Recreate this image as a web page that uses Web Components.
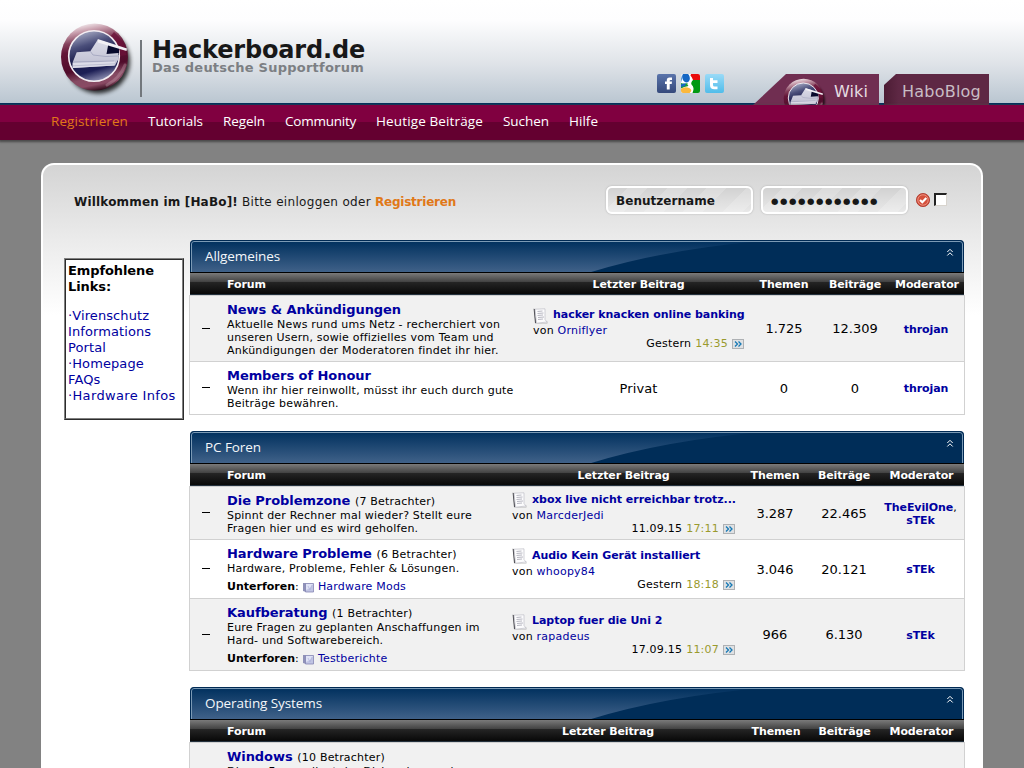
<!DOCTYPE html>
<html lang="de"><head><meta charset="utf-8"><title>Hackerboard.de</title>
<style>
html,body{margin:0;height:768px;overflow:hidden}
body{background:#828282;font-family:"DejaVu Sans",sans-serif;font-size:13px;color:#000}
</style></head><body>
<hb-header></hb-header>
<hb-nav>
<fit-text w="77" style="color:#e07818">Registrieren</fit-text><fit-text w="55">Tutorials</fit-text><fit-text w="42">Regeln</fit-text><fit-text w="71">Community</fit-text><fit-text w="107">Heutige Beiträge</fit-text><fit-text w="46">Suchen</fit-text><fit-text w="29">Hilfe</fit-text>
</hb-nav>
<hb-panel>
<hb-login slot="login"></hb-login>
<hb-links slot="side"></hb-links>
<hb-section name="Allgemeines" tw="75" cols="37px 306px 211px 80px 62px 78px" mp="4">
<hb-row class="odd" name="News &amp; Ankündigungen" desc="Aktuelle News rund ums Netz - recherchiert von|unseren Usern, sowie offizielles vom Team und|Ankündigungen der Moderatoren findet ihr hier." topics="1.725" posts="12.309" mods="throjan"><hb-post title-text="hacker knacken online banking" user="Orniflyer" day="Gestern" time="14:35"></hb-post></hb-row>
<hb-row name="Members of Honour" desc="Wenn ihr hier reinwollt, müsst ihr euch durch gute|Beiträge bewähren." topics="0" posts="0" mods="throjan"><span style="letter-spacing:.15px">Privat</span></hb-row>
</hb-section>
<hb-section name="PC Foren" tw="56" cols="37px 285px 223px 80px 58px 91px" mp="6">
<hb-row class="odd" name="Die Problemzone" viewers="(7 Betrachter)" desc="Spinnt der Rechner mal wieder? Stellt eure|Fragen hier und es wird geholfen." topics="3.287" posts="22.465" mods="TheEvilOne,sTEk"><hb-post title-text="xbox live nicht erreichbar trotz..." user="MarcderJedi" day="11.09.15" time="17:11"></hb-post></hb-row>
<hb-row name="Hardware Probleme" viewers="(6 Betrachter)" desc="Hardware, Probleme, Fehler &amp; Lösungen." sub="Hardware Mods" topics="3.046" posts="20.121" mods="sTEk"><hb-post title-text="Audio Kein Gerät installiert" user="whoopy84" day="Gestern" time="18:18"></hb-post></hb-row>
<hb-row class="odd" name="Kaufberatung" viewers="(1 Betrachter)" desc="Eure Fragen zu geplanten Anschaffungen im|Hard- und Softwarebereich." sub="Testberichte" topics="966" posts="6.130" mods="sTEk"><hb-post title-text="Laptop fuer die Uni 2" user="rapadeus" day="17.09.15" time="11:07"></hb-post></hb-row>
</hb-section>
<hb-section name="Operating Systems" tw="117" cols="37px 254px 254px 82px 55px 92px" mp="7">
<hb-row class="odd tall" name="Windows" viewers="(10 Betrachter)" desc="Dieses Forum dient der Diskussion rund um..." topics="" posts="" mods=""></hb-row>
</hb-section>
</hb-panel>
<script>
const esc=s=>s.replace(/&/g,'&amp;').replace(/</g,'&lt;');
class Base extends HTMLElement{
  connectedCallback(){
    if(this.shadowRoot)return;
    this.attachShadow({mode:'open'}).innerHTML=this.view();
  }
  a(n){return this.getAttribute(n)||''}
}
/* Text run that tracks its letters out or in to a given width. */
class FitText extends Base{
  view(){return '<style>:host{display:inline-block;white-space:nowrap}span{display:inline-block}</style><span><slot></slot></span>'}
  connectedCallback(){
    super.connectedCallback();
    const w=+this.a('w'),n=this.textContent.length;
    if(!w)return;
    const s=this.shadowRoot.querySelector('span');
    s.style.letterSpacing=((w-s.getBoundingClientRect().width)/n)+'px';
    this.style.width=w+'px';
  }
}
/* Round shoe emblem. */
class Logo extends Base{
  view(){return `<style>:host{display:block}svg{display:block;width:100%;height:100%;overflow:visible}</style>
<svg viewBox="0 0 72 74"><defs>
<linearGradient id="r" x1=".4" y1="0" x2=".6" y2="1"><stop offset="0" stop-color="#efe4e8"/><stop offset=".1" stop-color="#c79dac"/><stop offset=".24" stop-color="#83405b"/><stop offset=".36" stop-color="#641638"/><stop offset=".65" stop-color="#500c2b"/><stop offset=".8" stop-color="#854a62"/><stop offset=".9" stop-color="#8a4a64"/><stop offset="1" stop-color="#260412"/></linearGradient>
<linearGradient id="i" x1=".2" y1="0" x2=".5" y2="1"><stop offset="0" stop-color="#b4b7ce"/><stop offset=".3" stop-color="#4a4e7a"/><stop offset=".55" stop-color="#1b1d4c"/><stop offset=".8" stop-color="#1d1f55"/><stop offset="1" stop-color="#8486aa"/></linearGradient>
<linearGradient id="s" x1="0" y1="0" x2="0" y2="1"><stop offset="0" stop-color="#dcdce8"/><stop offset="1" stop-color="#bcbdd0"/></linearGradient>
<filter id="b" x="-30%" y="-30%" width="160%" height="160%"><feGaussianBlur stdDeviation="2.2"/></filter></defs>
<circle cx="38" cy="37.500" r="32" fill="#000" opacity=".8" filter="url(#b)"/>
<circle cx="34.500" cy="33" r="33.500" fill="url(#r)"/>
<path d="M47 61Q60 54 65 41" stroke="#c9a3b2" stroke-width="3" opacity=".35" fill="none" stroke-linecap="round"/>
<path d="M54 8Q65 17 66.500 31L60.500 32Q60 21 50 13Z" fill="#6b1238" opacity=".75"/>
<circle cx="34" cy="32" r="25.300" fill="url(#i)" stroke="#f3edf2" stroke-width="1.600"/>
<path d="M46.500 20L59 24V31H46Z" fill="#07092c"/>
<path d="M12.700 38.300L16.700 28.300L30.300 27.300L37.700 15.700L48.500 19L46.500 30L58.500 29L58.500 35L55 41.500L12.700 44Z" fill="url(#s)"/>
<path d="M37.700 15L67 24.500L66.500 27L38 18.500Z" fill="#f2f0f5"/>
<path d="M30.300 27.300L33 31L46 32.500L58 32M13 38L54 37" stroke="#a0a2bc" fill="none" stroke-width=".8"/>
<path d="M12.700 39L55 37.500L54.500 41.500L12.700 44Z" fill="#dcdce8"/><path d="M12.700 41.800L55 39.800" stroke="#a9abc2" stroke-width=".6"/></svg>`}
}
class Header extends Base{
  view(){return `<style>
:host{display:flex;height:103px;box-sizing:content-box;background:linear-gradient(#fff 0,#fdfdfe 20%,#dfe3e8 62%,#bac6d1 100%);border-bottom:2px solid #002e5c;position:relative}
.logo{width:72px;height:74px;margin:24px 0 0 60px;flex:none}
.bar{width:2px;height:57px;background:#72777c;margin:40px 10px 0 8px;flex:none}
.name{padding-top:38px;width:213px;font-weight:bold;white-space:nowrap}
.n{font-size:24px;line-height:24px;height:24px;color:#181818;display:block}
.t{font-size:13px;line-height:12px;height:12px;color:#7c7f83;display:block}
.soc{display:flex;gap:5px;margin:74px 0 0 292px}.soc svg{display:block;width:19px;height:19px}
.tabs{position:absolute;left:753px;top:74px;display:flex;gap:5px;height:31px;font-size:16px;line-height:35px}
.tab{box-sizing:border-box;overflow:hidden;height:31px;position:relative}
.w{width:126px;background:#702e51;clip-path:polygon(33px 0,100% 0,100% 100%,0 100%);padding-left:81px;color:#e5dce1}
.h{width:105px;background:linear-gradient(90deg,#4c1c34,#5e2844 14%);clip-path:polygon(12px 0,100% 0,100% 100%,0 100%,0 11px);padding-left:18px;color:#c9bdc4}
.w hb-logo{position:absolute;left:30px;top:5px;width:43px;height:44px}
</style>
<hb-logo class="logo"></hb-logo><div class="bar"></div>
<div class="name"><span class="n"><fit-text w="213">Hackerboard.de</fit-text></span><span class="t"><fit-text w="212">Das deutsche Supportforum</fit-text></span></div>
<div class="soc">
<svg viewBox="0 0 19 19"><defs><linearGradient id="f" x2="0" y2="1"><stop stop-color="#5a74ab"/><stop offset="1" stop-color="#35497b"/></linearGradient></defs><rect width="19" height="19" rx="2" fill="url(#f)"/><path d="M9.800 15.500V10H8V7.500H9.800V6.300Q9.800 3.500 12.500 3.500H15V6H13.500Q12.700 6 12.700 6.800V7.500H15L14.700 10H12.700V15.500Z" fill="#fff"/></svg>
<svg viewBox="0 0 19 19"><defs><clipPath id="c"><rect width="19" height="19" rx="2"/></clipPath></defs><g clip-path="url(#c)"><rect width="19" height="19" fill="#fff"/><path d="M10 0H19V6H12Q11 3 9.500 1.500Z" fill="#e90c0c"/><path d="M19 6V19H11.500Q14 13.500 10.500 10.500Q9.500 8.500 12 6Z" fill="#009913"/><path d="M0 1Q1.500 5 0 8.500Z" fill="#0b69c7"/><ellipse cx="5" cy="3.600" rx="3.700" ry="4.900" fill="#1467c4" transform="rotate(-18 5 3.600)"/><path d="M0 9Q3 10.500 6.500 9Q6 11 7.500 12Q3 12.500 0 14.500Z" fill="#1a9a30"/><path d="M0 10.500Q2 9 5 9.500L4 12L0 13Z" fill="#1467c4"/><ellipse cx="4.800" cy="16.600" rx="5.400" ry="3.300" fill="#fbb83c"/></g></svg>
<svg viewBox="0 0 19 19"><defs><linearGradient id="t" x2="0" y2="1"><stop stop-color="#9adaf7"/><stop offset="1" stop-color="#50bdea"/></linearGradient></defs><rect width="19" height="19" rx="2" fill="url(#t)"/><path d="M5 4H8V6.300H12.500V9H8V11Q8 12.500 9.500 12.500H12.500V15.300H9.500Q5 15.300 5 11Z" fill="#fff"/></svg>
</div>
<div class="tabs"><div class="tab w"><hb-logo></hb-logo><fit-text w="34">Wiki</fit-text></div><div class="tab h"><fit-text w="79">HaboBlog</fit-text></div></div>`}
}
class Nav extends Base{
  view(){return `<style>:host{display:flex;box-sizing:border-box;height:35px;padding-left:51px;background:linear-gradient(#800040 0 17px,#640030 17px);box-shadow:0 1px 2px 1px #4a4a4a;color:#fff;font:13.500px/33px "Open Sans",sans-serif;position:relative}
::slotted(*){margin-right:20px}</style><slot></slot>`}
}
class Panel extends Base{
  view(){return `<style>:host{display:block;box-sizing:border-box;width:942px;height:605px;overflow:hidden;margin:23px 0 0 41px;border:2px solid #fff;border-bottom:0;border-radius:13px 13px 0 0;background:linear-gradient(#d4d4d4,#ebebeb 75px,#fff 150px)}
.cols{display:flex}.side{width:120px;padding:18px 0 0 21px;margin-right:5px;flex:none}.main{display:flex;flex-direction:column;gap:16px;width:776px}</style>
<slot name="login"></slot><div class="cols"><div class="side"><slot name="side"></slot></div><div class="main"><slot></slot></div></div>`}
}
class Login extends Base{
  view(){return `<style>:host{display:flex;height:75px;box-sizing:border-box;padding:21px 0 0 31px;font-size:12px;color:#181818}
.t{width:532px;line-height:32px;white-space:nowrap;display:flex;gap:4px}
.f{box-sizing:border-box;width:147px;height:28px;border:2px solid #fff;border-radius:6px;margin-right:8px;padding-left:8px;line-height:27px;font-weight:bold;background:linear-gradient(rgba(255,255,255,0),rgba(255,255,255,.5)),repeating-linear-gradient(135deg,#d2d2d2 0 14px,#dadada 14px 28px);box-shadow:0 0 2px #aaa}
.p{font-size:8.500px;padding-left:8px;font-weight:normal}
svg{width:14px;height:14px;margin:7px 4px 0 0}
.c{box-sizing:border-box;width:13px;height:13px;margin-top:7px;background:#fff;border:solid;border-width:2px 1px 1px 2px;border-color:#222 #d8d4ce #d8d4ce #222}
b.o{color:#e07818}</style>
<div class="t"><b><fit-text w="164">Willkommen im [HaBo]!</fit-text></b><fit-text w="129">Bitte einloggen oder</fit-text><b class="o"><fit-text w="81">Registrieren</fit-text></b></div>
<div class="f"><fit-text w="99">Benutzername</fit-text></div><div class="f p"><fit-text w="108">●●●●●●●●●●●●</fit-text></div>
<svg viewBox="0 0 14 14"><circle cx="7" cy="7" r="6.600" fill="#d4503c" stroke="#a8352a" stroke-width=".8"/><circle cx="7" cy="7" r="5.200" fill="none" stroke="#f0a090" stroke-width=".8"/><path d="M4 7L6.300 9.200L10.300 5" fill="none" stroke="#fff" stroke-width="2.200"/></svg><div class="c"></div>`}
}
class Links extends Base{
  view(){return `<style>:host{display:block;box-sizing:border-box;width:120px;height:162px;border:1px solid;border-color:#808080 #2c2c2c #2c2c2c #808080;background:#fff;line-height:16px}
.i{box-sizing:border-box;height:160px;border:1px solid;border-color:#2c2c2c #808080 #808080 #2c2c2c;padding:3px 2px 1px}
p{margin:0 0 13px;letter-spacing:-.1px}.l{color:#0000a0;letter-spacing:.1px}.l :last-child{letter-spacing:.35px}.i div,.i b{display:block;white-space:nowrap}</style>
<div class="i"><p><b>Empfohlene</b><b>Links:</b></p><div class="l"><div>·Virenschutz</div><div>Informations</div><div>Portal</div><div>·Homepage</div><div>FAQs</div><div>·Hardware Infos</div></div></div>`}
}
class Section extends Base{
  view(){return `<style>:host{display:block;--cols:${this.a('cols')};--mp:${this.a('mp')}px}
.bar{box-sizing:border-box;position:relative;height:32px;width:774px;margin-left:1px;border:1px solid #002a54;border-bottom:0;border-radius:4px 4px 0 0;overflow:hidden;background:#002d58}
.bar svg{position:absolute;left:0;top:0}
.bar:after{content:"";position:absolute;inset:0 0 -4px;border:1px solid #7b9ab5;border-radius:3px}
.bar fit-text{position:relative;margin-left:14px;color:#f4f7fa;font:13.500px/31px "Open Sans",sans-serif}
.head{display:grid;grid-template-columns:var(--cols);width:774px;height:23px;margin-left:1px;box-sizing:border-box;border-top:1px solid #000;border-bottom:1px solid #24313d;background:linear-gradient(#7a7a7a,#414141 9px,#252525 9px,#080808);color:#fff;font:bold 11px/21px "DejaVu Sans",sans-serif;padding-top:1px;letter-spacing:-.12px;text-align:center;white-space:nowrap}
.head :nth-child(2){text-align:left}.head :last-child{padding-left:var(--mp)}
.rows{border:1px solid #d1d1d1;border-bottom:0}</style>
<div class="bar"><svg width="772" height="32"><defs><linearGradient id="g" x2="0" y2="1"><stop stop-color="#00305e"/><stop offset="1" stop-color="#42638a"/></linearGradient></defs><path d="M0 0H570Q470 9 397 32H0Z" fill="url(#g)"/><g fill="none" stroke="#fff" stroke-width="1"><path d="M756.300 11L759 8.300L761.700 11M756.300 14.500L759 11.800L761.700 14.500"/></g></svg><fit-text w="${this.a('tw')}">${esc(this.a('name'))}</fit-text></div>
<div class="head"><span></span><span>Forum</span><span>Letzter Beitrag</span><span>Themen</span><span>Beiträge</span><span>Moderator</span></div>
<div class="rows"><slot></slot></div>`}
}
class Row extends Base{
  view(){
    const sub=this.a('sub'),v=this.a('viewers');
    return `<style>:host{display:grid;grid-template-columns:var(--cols);align-items:center;border-bottom:1px solid #d1d1d1;background:#fff;text-align:center}
:host(.odd){background:#f1f1f1}
:host(.tall){min-height:71px}:host(.tall) .f{align-self:start}
.d{width:8px;height:1px;background:#000;margin:0 0 1px 12px}
.f{text-align:left;padding:6px 0 4px;font-size:11px;line-height:13px;letter-spacing:.2px;white-space:nowrap}
.n{height:15px;line-height:15px;padding-bottom:1px}.n b{font-size:13px;letter-spacing:-.06px;margin-right:1px}b.l,.l{color:#0000a0}
.s{height:14px;line-height:14px;padding-top:5px;display:flex;align-items:center}.s b{letter-spacing:0}.s svg{margin:1px 4px 0 4px}
.m{padding:1px 2px 0 var(--mp);font-size:11px;line-height:13px;letter-spacing:-.08px}</style>
<div class="d"></div><div class="f"><div class="n"><b class="l">${esc(this.a('name'))}</b>${v?' '+v:''}</div>${this.a('desc').split('|').map(t=>`<div>${esc(t)}</div>`).join('')}
${sub?`<div class="s"><span><b>Unterforen</b>:</span><svg width="11" height="11" viewBox="0 0 11 11"><path d="M0 1H3V10L0 9Z" fill="#8f91b8"/><path d="M2.500 1.500H10.500V10H2.500Z" fill="#c0c4e3" stroke="#8587b4" stroke-width=".8"/><path d="M3 2H10L7 6L3 8Z" fill="#dfe2f5"/><path d="M5 4L7 8L9 3" stroke="#aeb2da" stroke-width=".7" fill="none"/></svg><span class="l">${sub}</span></div>`:''}</div>
<slot></slot><div>${this.a('topics')}</div><div>${this.a('posts')}</div>
<div class="m">${this.a('mods').split(',').map(t=>`<b class="l">${t}</b>`).join(',<br>')}</div>`}
}
class Post extends Base{
  view(){return `<style>:host{display:block;text-align:left;font-size:11px;letter-spacing:.22px;white-space:nowrap;padding-bottom:1px}
.a{display:flex;height:17px;line-height:17px;align-items:center;justify-content:flex-start;letter-spacing:-.04px}.a svg{margin:2px 5px 0 0;flex:none}.l{color:#0000a0}
.b{line-height:14px;padding-top:1px;margin-bottom:-1px}.c{display:flex;justify-content:flex-end;align-items:center;line-height:13px;height:13px}.c i{font-style:normal;color:#9a9a2e;margin:0 4px}.c svg{margin-top:1px}</style>
<div class="a"><svg width="15" height="16" viewBox="0 0 15 16"><path d="M4 15.600L13.500 15L14.500 13V15.500L4 16Z" fill="#999" opacity=".6"/><path d="M.6 .8L2 1L3.300 15.500L2 15Z" fill="#4c4c52"/><path d="M2 1.200L12 .8V11.500L14 14L3.500 15.200Z" fill="#fcfcfd" stroke="#bdbdc6" stroke-width=".7"/><path d="M4.500 3.500L9.500 3M4.500 5.500L10.500 5M4.500 7.500L10 7M5 9.500L11 9M5 11.500L10 11" stroke="#a6a6b2" stroke-width=".8"/></svg><b class="l">${this.a('title-text')}</b></div>
<div class="b">von <span class="l">${this.a('user')}</span></div>
<div class="c"><span>${this.a('day')}</span><i>${this.a('time')}</i><svg width="12" height="10" viewBox="0 0 12 10"><rect x=".5" y=".5" width="11" height="9" fill="#dfe1e3" stroke="#aeb1b4"/><path d="M3 2.500L5.500 5L3 7.500M6.500 2.500L9 5L6.500 7.500" fill="none" stroke="#1779b5" stroke-width="1.300"/></svg></div>`}
}
/* fit-text comes last: it measures text in the font its surrounding elements set. */
for(const [n,c] of Object.entries({'hb-logo':Logo,'hb-header':Header,'hb-nav':Nav,'hb-panel':Panel,'hb-login':Login,'hb-links':Links,'hb-section':Section,'hb-row':Row,'hb-post':Post,'fit-text':FitText}))customElements.define(n,c);
</script>
</body></html>
